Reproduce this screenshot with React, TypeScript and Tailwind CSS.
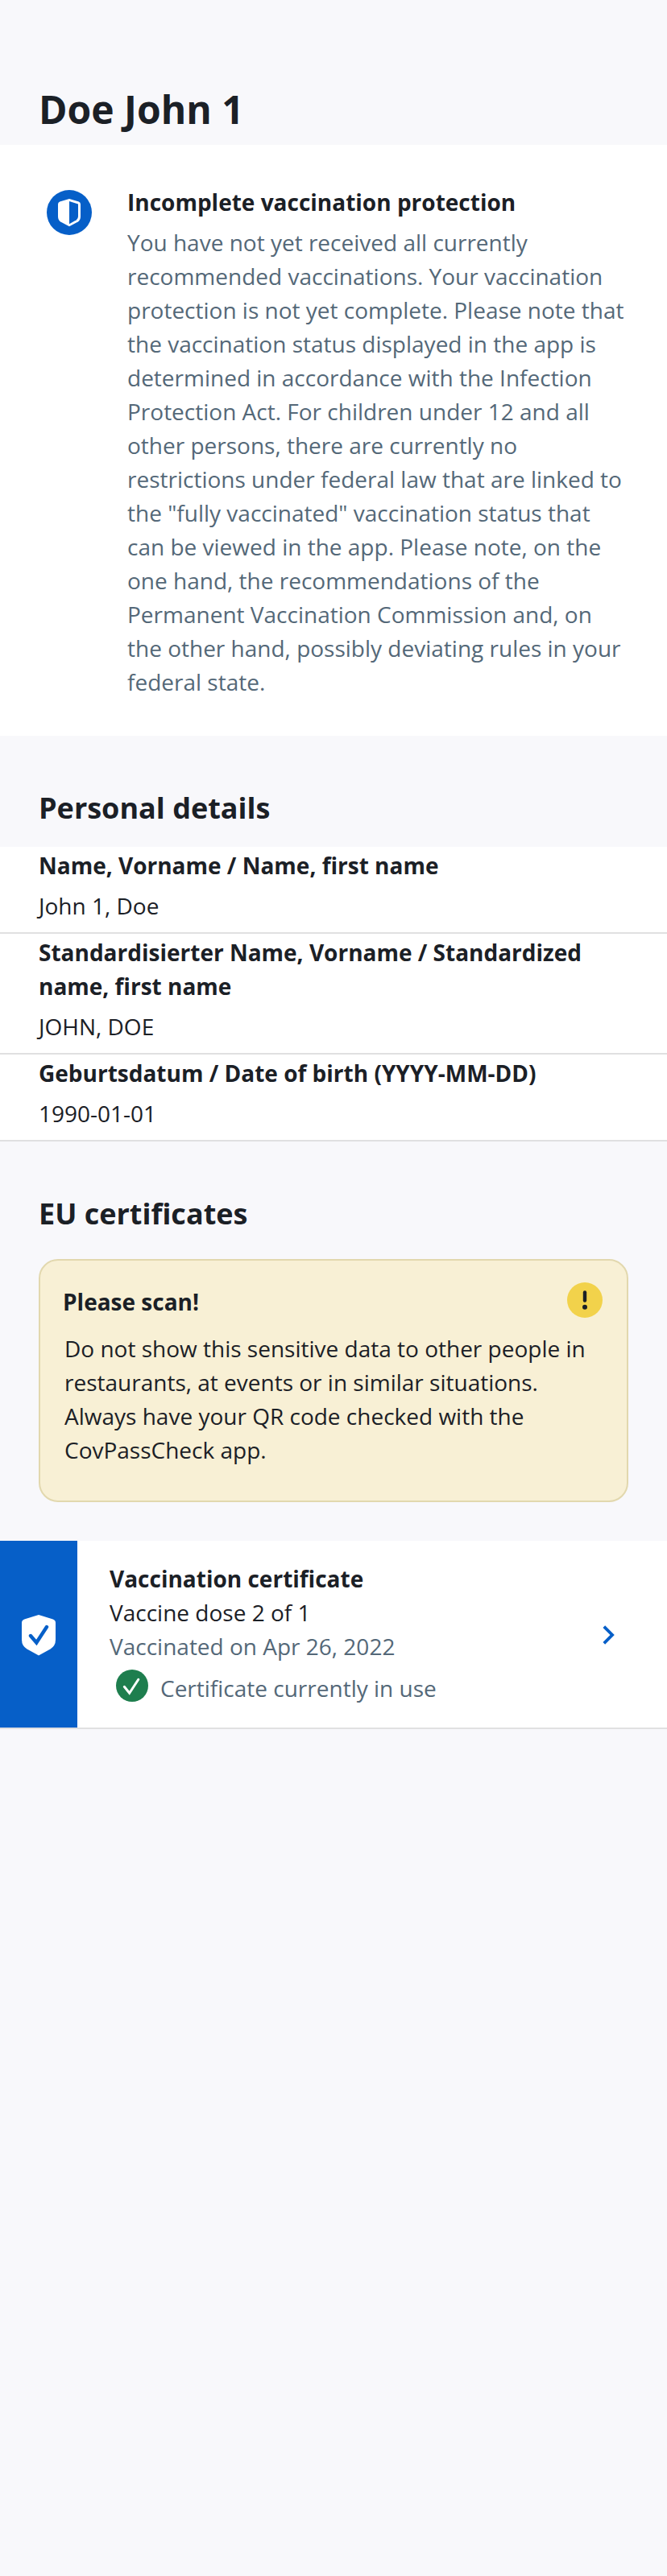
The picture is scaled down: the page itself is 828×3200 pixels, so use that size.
import React from "react";

const details = [
  { label: "Name, Vorname / Name, first name", value: "John 1, Doe" },
  { label: "Standardisierter Name, Vorname / Standardized name, first name", value: "JOHN, DOE" },
  { label: "Geburtsdatum / Date of birth (YYYY-MM-DD)", value: "1990-01-01" },
];

function HalfShieldIcon() {
  return (
    <svg className="size-14 shrink-0" viewBox="0 0 56 56">
      <circle cx="28" cy="28" r="28" fill="#065fc8" />
      <path d="M28 11 L39.8 14.6 Q42 15.4 42 17.6 V33 Q42 37.2 38.8 39.4 L28 45.2 L17.2 39.4 Q14 37.2 14 33 V17.6 Q14 15.4 16.2 14.6 Z" fill="#fff" />
      <path d="M28 14 L39 17.6 V33 Q39 35.6 36.8 37.2 L28 42.3 Z" fill="#065fc8" />
    </svg>
  );
}

function ShieldCheckIcon() {
  return (
    <svg className="h-[51px] w-[42px]" viewBox="0 0 42 51">
      <path d="M21 0 L38 5.3 Q42 6.8 42 9.5 V31 Q42 38.5 35.5 42.5 L21 50.5 L6.5 42.5 Q0 38.5 0 31 V9.5 Q0 6.8 4 5.3 Z" fill="#fff" />
      <path d="M11 26 L18.3 34.5 L31 15" fill="none" stroke="#065fc8" strokeWidth="4.4" strokeLinecap="round" />
    </svg>
  );
}

function CircleCheckIcon() {
  return (
    <svg className="size-10 shrink-0" viewBox="0 0 40 40">
      <circle cx="20" cy="20" r="20" fill="#1e7e4e" />
      <path d="M10.3 21.3 L16.7 29.3 L27.8 12.3" fill="none" stroke="#fff" strokeWidth="3" strokeLinecap="round" />
    </svg>
  );
}

function WarningIcon() {
  return (
    <svg className="-mt-[3px] size-11 shrink-0" viewBox="0 0 44 44">
      <circle cx="22" cy="22" r="22" fill="#f2d24b" />
      <path d="M22 12.4 V22.6" stroke="#1b2026" strokeWidth="4.4" strokeLinecap="round" />
      <circle cx="22" cy="30.8" r="3" fill="#1b2026" />
    </svg>
  );
}

function ChevronIcon() {
  return (
    <svg className="h-6 w-4" viewBox="0 0 16 24">
      <path d="M1.8 1.6 L12.1 12 L1.8 22.4" fill="none" stroke="#065fc8" strokeWidth="3.8" />
    </svg>
  );
}

export default function App() {
  return (
    <main className="min-h-[3200px] w-[828px] bg-[#f8f8fb] font-['Open_Sans',sans-serif] text-[28px] leading-[42px] text-[#1b2026]">
      <h1 className="px-12 pt-[103px] pb-3 text-[48px] leading-[65px] font-bold">Doe John 1</h1>

      <section className="flex gap-[44px] bg-white pt-[50px] pr-12 pb-[46px] pl-[58px]">
        <div className="pt-1.5"><HalfShieldIcon /></div>
        <div>
          <h2 className="font-bold">Incomplete vaccination protection</h2>
          <p className="mt-2 text-[#546878]">
            You have not yet received all currently recommended vaccinations. Your vaccination protection is not yet
            complete. Please note that the vaccination status displayed in the app is determined in accordance with the
            Infection Protection Act. For children under 12 and all other persons, there are currently no restrictions
            under federal law that are linked to the "fully vaccinated" vaccination status that can be viewed in the
            app. Please note, on the one hand, the recommendations of the Permanent Vaccination Commission and, on the
            other hand, possibly deviating rules in your federal state.
          </p>
        </div>
      </section>

      <section>
        <h2 className="px-12 pt-[65px] pb-6 text-[36px] leading-[49px] font-bold">Personal details</h2>
        <dl>
          {details.map((item) => (
            <div key={item.label} className="border-b-2 border-[#e0e0e1] bg-white px-12 pt-0.5 pb-3">
              <dt className="font-bold">{item.label}</dt>
              <dd className="mt-2">{item.value}</dd>
            </div>
          ))}
        </dl>
      </section>

      <section>
        <h2 className="px-12 pt-[65px] pb-8 text-[36px] leading-[49px] font-bold">EU certificates</h2>
        <div className="mx-12 rounded-3xl border-2 border-[#e2d8ae] bg-[#f8f0d5] pt-[30px] pr-[30px] pb-[42px] pl-7">
          <div className="flex h-[42px] justify-between">
            <h3 className="font-bold">Please scan!</h3>
            <WarningIcon />
          </div>
          <p className="mt-4 pl-0.5">
            Do not show this sensitive data to other people in restaurants, at events or in similar situations. Always
            have your QR code checked with the CovPassCheck app.
          </p>
        </div>

        <div className="mt-12 flex h-[234px] border-b-2 border-[#e0e0e1] bg-white">
          <div className="flex w-24 items-center justify-center bg-[#065fc8] pt-0.5"><ShieldCheckIcon /></div>
          <div className="flex-1 pt-[26px] pl-10">
            <h3 className="font-bold">Vaccination certificate</h3>
            <p>Vaccine dose 2 of 1</p>
            <p className="text-[#546878]">Vaccinated on Apr 26, 2022</p>
            <div className="mt-2 flex gap-[15px] pl-2 text-[#546878]">
              <CircleCheckIcon />
              <span className="pt-0.5">Certificate currently in use</span>
            </div>
          </div>
          <div className="flex items-center pt-0.5 pr-16"><ChevronIcon /></div>
        </div>
      </section>
    </main>
  );
}
